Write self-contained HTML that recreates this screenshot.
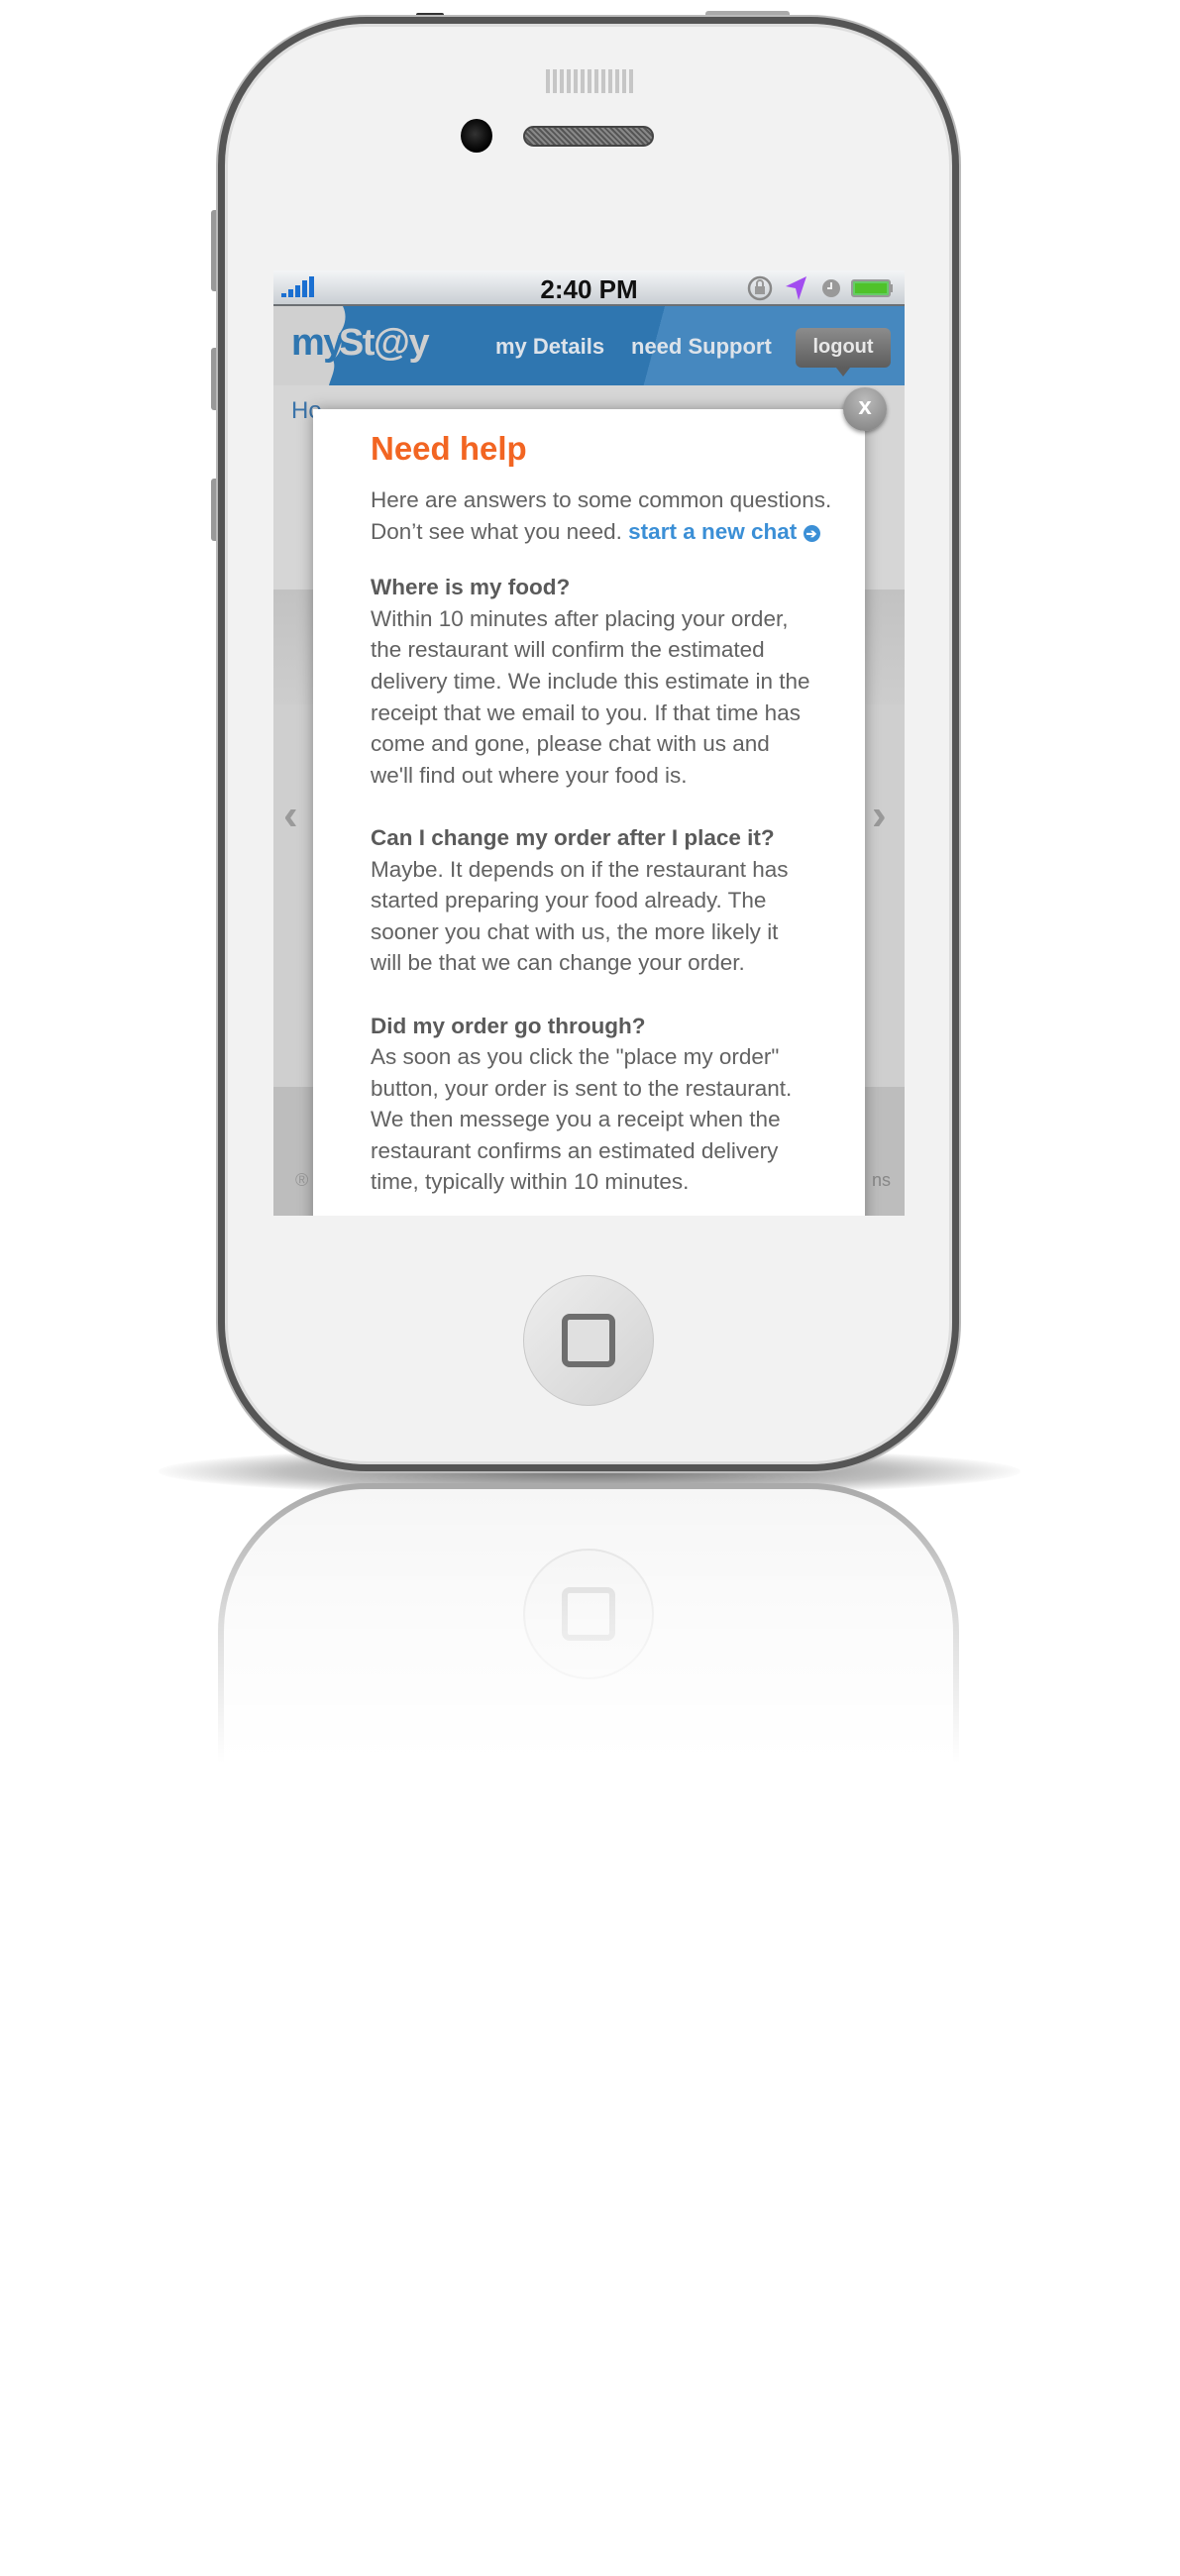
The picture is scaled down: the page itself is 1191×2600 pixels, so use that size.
<!DOCTYPE html>
<html><head><meta charset="utf-8"><style>
*{margin:0;padding:0;box-sizing:border-box}
body{width:1191px;height:2600px;background:#fff;position:relative;overflow:hidden;font-family:"Liberation Sans",Arial,sans-serif}
.abs{position:absolute}
.phone{left:220px;top:17px;width:748px;height:1468px;border-radius:150px;background:#f2f2f2;border:7px solid #555;box-shadow:0 0 0 2px #bbb,inset 0 0 0 3px #ddd}
.shadow{left:160px;top:1460px;width:870px;height:50px;border-radius:50%;background:radial-gradient(ellipse at center,rgba(0,0,0,.55) 0%,rgba(0,0,0,.25) 50%,rgba(0,0,0,0) 72%)}
.refl{left:220px;top:1497px;width:748px;height:300px;border-radius:150px 150px 0 0;border:6px solid #aaa;border-bottom:none;background:#f6f6f6}
.fade{left:150px;top:1500px;width:900px;height:310px;background:linear-gradient(rgba(255,255,255,0) 0%,rgba(255,255,255,.6) 45%,#fff 90%)}
.screen{left:276px;top:273px;width:637px;height:954px;background:#d2d2d2;overflow:hidden}
.status{left:0;top:0;width:637px;height:36px;background:linear-gradient(#f3f5f7,#c9ced3);border-bottom:2px solid #6b6f73}
.nav{left:0;top:36px;width:637px;height:80px;background:linear-gradient(105deg,#2f76b0 0,#2f76b0 60%,#4688bf 60%)}
.modal{left:40px;top:140px;width:557px;height:900px;background:#fff;box-shadow:0 0 14px rgba(0,0,0,.35)}
.modal .c{position:absolute;left:58px;top:0;width:520px;color:#626262;font-size:22.5px;line-height:31.6px;white-space:nowrap}
h1{color:#f26522;font-size:33px;font-weight:bold;margin-top:24px;height:52px}
b{color:#5a5a5a}
</style></head><body>
<div class="abs shadow"></div>
<div class="abs refl"></div>
<div class="abs" style="left:528px;top:1563px;width:132px;height:132px;border-radius:50%;border:2px solid #ddd;background:#f2f2f2"></div>
<div class="abs" style="left:567px;top:1602px;width:54px;height:54px;border-radius:8px;border:6px solid #ccc"></div>
<div class="abs fade"></div>
<div class="abs" style="left:213px;top:212px;width:8px;height:82px;background:#999;border-radius:3px"></div>
<div class="abs" style="left:213px;top:351px;width:8px;height:63px;background:#999;border-radius:3px"></div>
<div class="abs" style="left:213px;top:483px;width:8px;height:63px;background:#999;border-radius:3px"></div>
<div class="abs" style="left:420px;top:13px;width:28px;height:10px;background:#333;border-radius:2px"></div>
<div class="abs" style="left:712px;top:11px;width:85px;height:8px;background:#aaa;border-radius:3px"></div>
<div class="abs phone"></div>
<div class="abs" style="left:551px;top:70px;width:89px;height:24px;background:repeating-linear-gradient(90deg,#bbb 0 4px,transparent 4px 7px);opacity:.8"></div>
<div class="abs" style="left:465px;top:120px;width:32px;height:34px;border-radius:50%;background:radial-gradient(circle at 45% 45%,#333 0,#111 45%,#000 70%)"></div>
<div class="abs" style="left:528px;top:127px;width:132px;height:21px;border-radius:11px;background:repeating-linear-gradient(45deg,#555 0 2px,#888 2px 4px);border:2px solid #444"></div>
<div class="abs screen">
 <div class="abs status">
  <svg class="abs" style="left:8px;top:6px" width="40" height="22"><g fill="#1a6fd1"><rect x="0" y="17" width="5" height="4"/><rect x="7" y="13" width="5" height="8"/><rect x="14" y="9" width="5" height="12"/><rect x="21" y="4" width="5" height="17"/><rect x="28" y="0" width="5" height="21"/></g></svg>
  <div class="abs" style="left:0;width:637px;top:4px;text-align:center;font-weight:bold;font-size:26px;color:#111">2:40 PM</div>
  <svg class="abs" style="left:477px;top:3px" width="150" height="30"><circle cx="14" cy="15" r="11" fill="none" stroke="#888" stroke-width="2.5"/><rect x="9" y="13" width="10" height="8" fill="#999"/><path d="M11 13v-3a3 3 0 0 1 6 0v3" fill="none" stroke="#999" stroke-width="2"/><path d="M61 3 L40 13 L50 15 L53 27 Z" fill="#a24cf0"/><circle cx="86" cy="15" r="9" fill="#999"/><path d="M86 9v6h-4" stroke="#eee" stroke-width="2" fill="none"/><rect x="107" y="7" width="38" height="16" rx="2" fill="#6c6" stroke="#999" stroke-width="2"/><rect x="110" y="10" width="32" height="10" fill="#4fc22a"/><rect x="145" y="11" width="3" height="8" fill="#999"/></svg>
 </div>
 <div class="abs nav">
  <svg class="abs" style="left:0;top:0" width="110" height="80"><path d="M0 0H70C76 12 70 24 66 28C72 40 66 50 60 54C64 62 58 72 56 80H0Z" fill="#d0d0d0"/></svg>
  <div class="abs" style="left:18px;top:16px;font-size:38px;font-weight:bold;letter-spacing:-1.5px"><span style="color:#2f76b0">my</span><span style="color:#cfcfcf;margin-left:-4px">St@y</span></div>
  <div class="abs" style="left:224px;top:28px;font-size:22px;font-weight:bold;color:#dde3ea">my Details</div>
  <div class="abs" style="left:361px;top:28px;font-size:22px;font-weight:bold;color:#dde3ea">need Support</div>
  <div class="abs" style="left:527px;top:22px;width:96px;height:40px;border-radius:6px;background:linear-gradient(#8c8c8c,#5d5d5d);color:#e8e8e8;font-size:20px;font-weight:bold;text-align:center;line-height:38px">logout</div>
  <div class="abs" style="left:568px;top:62px;width:0;height:0;border-left:7px solid transparent;border-right:7px solid transparent;border-top:9px solid #5d5d5d"></div>
 </div>
 <div class="abs" style="left:0;top:116px;width:637px;height:206px;background:#d6d6d6"></div>
 <div class="abs" style="left:0;top:322px;width:637px;height:116px;background:linear-gradient(#c2c2c2,#cdcdcd)"></div>
 <div class="abs" style="left:0;top:438px;width:637px;height:386px;background:#cfcfcf"></div>
 <div class="abs" style="left:0;top:824px;width:637px;height:130px;background:#bdbdbd"></div>
 <div class="abs" style="left:18px;top:128px;font-size:24px;color:#3b74aa">Ho</div>
 <div class="abs" style="left:10px;top:525px;font-size:44px;color:#9a9a9a;font-weight:bold">‹</div>
 <div class="abs" style="left:604px;top:525px;font-size:44px;color:#9a9a9a;font-weight:bold">›</div>
 <div class="abs" style="left:22px;top:908px;font-size:18px;color:#999">®</div>
 <div class="abs" style="left:604px;top:908px;font-size:18px;color:#888">ns</div>
 <div class="abs modal"><div class="c">
  <h1>Need help</h1>
  <p>Here are answers to some common questions.<br>Don’t see what you need. <span style="color:#3b8fd6;font-weight:bold">start a new chat</span> <span style="display:inline-block;width:17px;height:17px;border-radius:50%;background:#3b8fd6;color:#fff;font-size:13px;line-height:17px;text-align:center;vertical-align:1px;font-weight:bold">➔</span></p>
  <p style="margin-top:25px"><b>Where is my food?</b><br>Within 10 minutes after placing your order,<br>the restaurant will confirm the estimated<br>delivery time. We include this estimate in the<br>receipt that we email to you. If that time has<br>come and gone, please chat with us and<br>we'll find out where your food is.</p>
  <p style="margin-top:31.6px"><b>Can I change my order after I place it?</b><br>Maybe. It depends on if the restaurant has<br>started preparing your food already. The<br>sooner you chat with us, the more likely it<br>will be that we can change your order.</p>
  <p style="margin-top:31.6px"><b>Did my order go through?</b><br>As soon as you click the "place my order"<br>button, your order is sent to the restaurant.<br>We then messege you a receipt when the<br>restaurant confirms an estimated delivery<br>time, typically within 10 minutes.</p>
 </div></div>
 <div class="abs" style="left:575px;top:118px;width:44px;height:44px;border-radius:50%;background:radial-gradient(circle at 50% 30%,#bbb,#7d7d7d);box-shadow:0 2px 4px rgba(0,0,0,.4);color:#fff;font-weight:bold;font-size:24px;text-align:center;line-height:40px">x</div>
</div>
<div class="abs" style="left:528px;top:1287px;width:132px;height:132px;border-radius:50%;background:linear-gradient(135deg,#eee,#d2d2d2);border:1px solid #c8c8c8"></div>
<div class="abs" style="left:567px;top:1326px;width:54px;height:54px;border-radius:8px;border:6px solid #6e6e6e;background:#e0e0e0"></div>
</body></html>
